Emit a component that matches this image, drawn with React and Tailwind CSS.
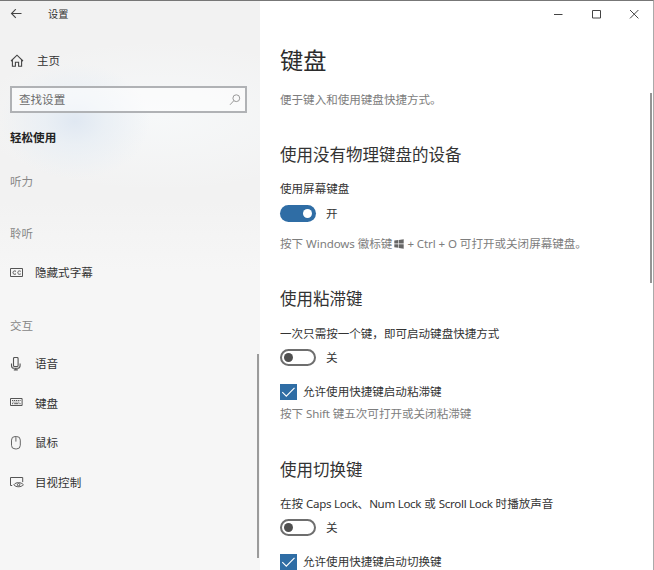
import React from 'react'

const navGroups = [
  { title: '听力', className: 'mt-[28px]', items: [] },
  { title: '聆听', className: 'mt-[36px]', items: [{ icon: CaptionIcon, label: '隐藏式字幕' }] },
  {
    title: '交互',
    className: 'mt-[25px]',
    items: [
      { icon: MicIcon, label: '语音' },
      { icon: KeyboardIcon, label: '键盘' },
      { icon: MouseIcon, label: '鼠标' },
      { icon: EyeControlIcon, label: '目视控制' },
    ],
  },
]

function BackIcon() {
  return (
    <svg width="12" height="10" viewBox="0 0 12 10" fill="none" stroke="#444" strokeWidth="1.1">
      <path d="M11.5 4.5H1.5M5.8 .2L1.5 4.5l4.3 4.3" />
    </svg>
  )
}

function HomeIcon() {
  return (
    <svg width="14" height="14" viewBox="0 0 14 14" fill="none" stroke="#444" strokeWidth="1.1">
      <path d="M1 7L7 1.2 13 7M2.4 5.8v6.5h3V8.2h3.2v4.1h3V5.8" />
    </svg>
  )
}

function SearchIcon() {
  return (
    <svg width="12" height="12" viewBox="0 0 12 12" fill="none" stroke="#999" strokeWidth="1">
      <circle cx="7.3" cy="4.2" r="3.4" />
      <path d="M4.8 6.7L1 10.8" />
    </svg>
  )
}

function CaptionIcon() {
  return (
    <svg width="14" height="14" viewBox="0 0 14 14" fill="none" stroke="#555" strokeWidth="1">
      <path d="M.5 2.5h12v8H.5z" />
      <path d="M6 5.3C4.4 4.4 3 5.1 3 6.6s1.4 2.2 3 1.3M10.8 5.3c-1.6-.9-3-.2-3 1.3s1.4 2.2 3 1.3" />
    </svg>
  )
}

function MicIcon() {
  return (
    <svg width="14" height="14" viewBox="0 0 14 14" fill="none" stroke="#555" strokeWidth="1.1">
      <rect x="3.5" y=".5" width="4.6" height="9" rx="1" />
      <path d="M1.5 6.6v1.8c0 1.6 1 2.8 2.6 2.8h3.4c1.6 0 2.6-1.2 2.6-2.8V6.6M5.8 11v2M3.8 12.9h4" />
    </svg>
  )
}

function KeyboardIcon() {
  return (
    <svg width="14" height="14" viewBox="0 0 14 14" fill="none" stroke="#555" strokeWidth="1">
      <path d="M.5 1.5h11.6v7H.5z" />
      <path d="M2 3.5h8.6" strokeDasharray="1.2 .7" />
      <path d="M2.6 5.1h7.6" strokeDasharray="1 .9" />
      <path d="M2 6.7h1.2M4.2 6.7h4.2M9.4 6.7h1.2" />
    </svg>
  )
}

function MouseIcon() {
  return (
    <svg width="14" height="14" viewBox="0 0 14 14" fill="none" stroke="#666" strokeWidth="1">
      <rect x="1.5" y=".5" width="8.8" height="12.4" rx="3.6" />
      <path d="M5.9 .6v5" />
    </svg>
  )
}

function EyeControlIcon() {
  return (
    <svg width="14" height="14" viewBox="0 0 14 14" fill="none" stroke="#555" strokeWidth="1">
      <path d="M2.2 9.5H.5v-8h12.2v4.6" />
      <path d="M3.8 8.8C6 5.9 11 5.9 13.4 8.8 11 11.4 6 11.4 3.8 8.8z" />
      <circle cx="8.6" cy="8.7" r="1.2" />
    </svg>
  )
}

function WindowsLogo() {
  return (
    <svg className="mr-[3px] -ml-px inline-block align-[-1px]" width="10" height="10" viewBox="0 0 10 10" fill="#666">
      <path d="M.3 1.6L4.2 1v3.6H.3zM4.8 .9L9.7 .2v4.4H4.8zM.3 5.2h3.9v3.6L.3 8.3zM4.8 5.2h4.9v4.5l-4.9-.8z" />
    </svg>
  )
}

function Toggle({ on }) {
  return (
    <div className="flex h-[17px] items-center">
      {on ? (
        <div className="flex h-[17px] w-9 items-center justify-end rounded-full bg-[#2f6da5] pr-[4px]">
          <span className="size-[9px] rounded-full bg-white" />
        </div>
      ) : (
        <div className="flex h-[17px] w-9 items-center rounded-full border-2 border-[#6e6e6e] pl-[2px]">
          <span className="size-[9px] rounded-full bg-[#4f4f4f]" />
        </div>
      )}
      <span className="ml-[10px] text-[#333]">{on ? '开' : '关'}</span>
    </div>
  )
}

function Checkbox({ label }) {
  return (
    <div className="flex h-4 items-center">
      <svg width="17" height="16" viewBox="0 0 17 16" fill="none">
        <path d="M0 0h17v16H0z" fill="#2f6da5" />
        <path d="M2.3 8.2l4 4 8.2-8.4" stroke="#fff" strokeWidth="1.1" />
      </svg>
      <span className="ml-[6px] text-[#333]">{label}</span>
    </div>
  )
}

function Sidebar() {
  return (
    <aside className="flex w-[260px] shrink-0 bg-[radial-gradient(ellipse_75px_58px_at_75px_120px,#e0e8f2_0%,rgba(230,237,244,0.7)_40%,rgba(240,244,248,0)_100%),radial-gradient(ellipse_190px_75px_at_160px_115px,#f6f8f9_0%,rgba(246,248,249,0)_100%),linear-gradient(180deg,#f2f2f2_0px,#f2f2f2_200px,#f6f6f6_270px,#f6f6f6_100%)]">
      <div className="flex flex-1 flex-col pl-[10px]">
        <div className="mt-[5px] flex h-4 items-center">
          <BackIcon />
          <span className="ml-[26px] text-[10.2px] text-[#333]">设置</span>
        </div>
        <div className="mt-[31px] flex h-4 items-center">
          <HomeIcon />
          <span className="ml-[13px] text-[#333]">主页</span>
        </div>
        <div className="mt-[17px] flex h-[27px] w-[237px] items-center justify-between border-2 border-[#b0b2b5] bg-white/50 pr-[4px] pl-[7px]">
          <span className="text-[#6c6c6c]">查找设置</span>
          <SearchIcon />
        </div>
        <h2 className="mt-[17px] leading-4 font-bold text-[#222]">轻松使用</h2>
        {navGroups.map((group) => (
          <section key={group.title} className={group.className}>
            <h3 className="leading-4 text-[#868686]">{group.title}</h3>
            {group.items.length > 0 && (
              <ul className="mt-[11px] flex flex-col">
                {group.items.map(({ icon: Icon, label }) => (
                  <li key={label} className="flex h-[39.5px] items-center">
                    <Icon />
                    <span className="ml-[11px] text-[#333]">{label}</span>
                  </li>
                ))}
              </ul>
            )}
          </section>
        ))}
      </div>
      <div className="mt-[353px] mr-px h-[204px] w-[2px] bg-[#9b9b9b]" />
    </aside>
  )
}

function WindowButtons() {
  return (
    <div className="flex h-[26px] items-center justify-end gap-7 pr-[14px]">
      <svg width="10" height="10" viewBox="0 0 10 10" stroke="#444">
        <path d="M1 5.5h8.5" />
      </svg>
      <svg width="10" height="10" viewBox="0 0 10 10" fill="none" stroke="#444">
        <path d="M1.5 1.5h8v7.5h-8z" />
      </svg>
      <svg width="10" height="10" viewBox="0 0 10 10" stroke="#444">
        <path d="M1 1l8.4 8.4M9.4 1L1 9.4" />
      </svg>
    </div>
  )
}

export default function App() {
  return (
    <div className="flex h-[570px] w-[654px] overflow-hidden border-t border-r border-t-[#777] border-r-[#aaa] bg-white font-['Noto_Sans','Noto_Sans_CJK_SC',sans-serif] text-[11.55px] leading-4 whitespace-nowrap">
      <Sidebar />
      <main className="flex min-w-0 flex-1 flex-col">
        <WindowButtons />
        <div className="flex flex-1">
          <div className="flex flex-1 flex-col pl-5">
            <h1 className="mt-[17px] text-[23.2px] leading-8 text-[#2b2b2b]">键盘</h1>
            <p className="mt-[16px] text-[#7d7d7d]">便于键入和使用键盘快捷方式。</p>

            <h2 className="mt-[35px] text-[16.5px] leading-6 text-[#333]">使用没有物理键盘的设备</h2>
            <p className="mt-[14px] mb-2 text-[#333]">使用屏幕键盘</p>
            <Toggle on />
            <p className="mt-[14px] text-[#7d7d7d]">
              按下 <span className="tracking-[-0.1px]">Windows</span> 徽标键 <WindowsLogo />
              <span className="tracking-[-0.1px]">+ Ctrl + O</span> 可打开或关闭屏幕键盘。
            </p>

            <h2 className="mt-[35px] text-[16.5px] leading-6 text-[#333]">使用粘滞键</h2>
            <p className="mt-[15px] mb-[7px] text-[#333]">一次只需按一个键，即可启动键盘快捷方式</p>
            <Toggle />
            <div className="mt-[18px]">
              <Checkbox label="允许使用快捷键启动粘滞键" />
            </div>
            <p className="mt-[6px] text-[#7d7d7d]">
              按下 <span className="tracking-[-0.2px]">Shift</span> 键五次可打开或关闭粘滞键
            </p>

            <h2 className="mt-[36px] text-[16.5px] leading-6 text-[#333]">使用切换键</h2>
            <p className="mt-[14px] mb-[7px] text-[#333]">
              在按 <span className="tracking-[-0.3px]">Caps Lock</span>、<span className="tracking-[-0.3px]">Num Lock</span> 或{' '}
              <span className="tracking-[-0.3px]">Scroll Lock</span> 时播放声音
            </p>
            <Toggle />
            <div className="mt-[18px]">
              <Checkbox label="允许使用快捷键启动切换键" />
            </div>
          </div>
          <div className="mt-[66px] mr-px h-[190px] w-[2px] bg-[#959595]" />
        </div>
      </main>
    </div>
  )
}
